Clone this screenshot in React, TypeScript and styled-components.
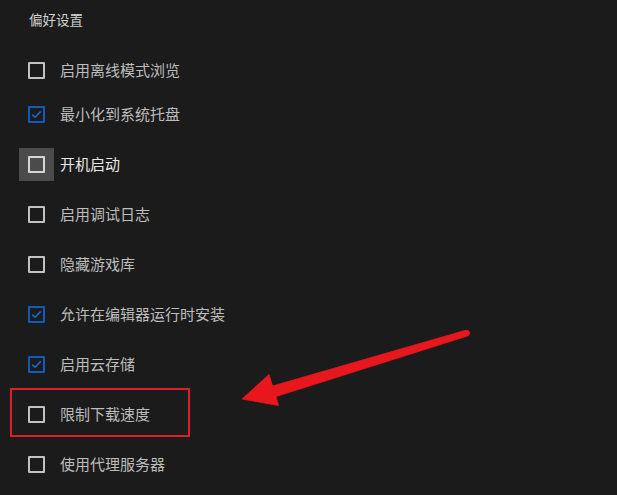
import React from 'react'
import styled, { createGlobalStyle } from 'styled-components'

const GlobalStyle = createGlobalStyle`
  html, body {
    margin: 0;
    padding: 0;
    background: #1b1b1b;
  }
  body {
    font-family: "Noto Sans CJK SC", "Noto Sans", sans-serif;
  }
`

interface OptionItem {
  label: string
  checked?: boolean
  hovered?: boolean
  marked?: boolean
  height?: number
}

const options: OptionItem[] = [
  { label: '启用离线模式浏览', height: 38 },
  { label: '最小化到系统托盘', checked: true },
  { label: '开机启动', hovered: true },
  { label: '启用调试日志' },
  { label: '隐藏游戏库' },
  { label: '允许在编辑器运行时安装', checked: true },
  { label: '启用云存储', checked: true },
  { label: '限制下载速度', marked: true },
  { label: '使用代理服务器' }
]

const Page = styled.div`
  position: relative;
  width: 617px;
  height: 495px;
  overflow: hidden;
  background: #1b1b1b;
`

const Panel = styled.div`
  display: flex;
  flex-direction: column;
  padding-left: 29px;
`

const Heading = styled.h2`
  margin: 0;
  height: 51px;
  padding-top: 9px;
  box-sizing: border-box;
  font-size: 13.5px;
  font-weight: 400;
  line-height: 20px;
  color: #d2d2d2;
`

const Row = styled.div<{ $height: number }>`
  position: relative;
  display: flex;
  align-items: center;
  height: ${(p) => p.$height}px;
`

const BoxArea = styled.div<{ $hovered?: boolean }>`
  display: flex;
  align-items: center;
  justify-content: center;
  width: 35px;
  height: 33px;
  margin-left: -10px;
  margin-right: 6px;
  background: ${(p) => (p.$hovered ? '#4b4b4b' : 'transparent')};
`

const Box = styled.div<{ $checked?: boolean; $hovered?: boolean }>`
  box-sizing: border-box;
  width: 17px;
  height: 17px;
  border: 2px solid ${(p) => (p.$checked ? '#0f5cbd' : p.$hovered ? '#d6d6d6' : '#c2c2c2')};
  border-radius: 1px;
  display: flex;
  align-items: center;
  justify-content: center;
`

const Label = styled.span<{ $hovered?: boolean }>`
  font-size: 15px;
  line-height: 20px;
  color: ${(p) => (p.$hovered ? '#e8e8e8' : '#bdbdbd')};
`

const Marker = styled.div`
  position: absolute;
  left: -19px;
  top: -1px;
  width: 180px;
  height: 49px;
  box-sizing: border-box;
  border: 2px solid #dc1f26;
  pointer-events: none;
`

const Overlay = styled.svg`
  position: absolute;
  left: 0;
  top: 0;
  pointer-events: none;
`

const CheckMark = () => (
  <svg width="11" height="9" viewBox="0 0 11 9">
    <path d="M1.2 4.6 L4 7.2 L9.8 1.4" fill="none" stroke="#1a6ad4" strokeWidth="1.5" />
  </svg>
)

const Option: React.FC<{ item: OptionItem }> = ({ item }) => (
  <Row $height={item.height ?? 50}>
    <BoxArea $hovered={item.hovered}>
      <Box $checked={item.checked} $hovered={item.hovered}>
        {item.checked ? <CheckMark /> : null}
      </Box>
    </BoxArea>
    <Label $hovered={item.hovered}>{item.label}</Label>
    {item.marked ? <Marker /> : null}
  </Row>
)

export default function App() {
  return (
    <Page>
      <GlobalStyle />
      <Panel>
        <Heading>偏好设置</Heading>
        {options.map((item) => (
          <Option key={item.label} item={item} />
        ))}
      </Panel>
      <Overlay width="617" height="495" viewBox="0 0 617 495">
        <path
          d="M242 399 L269 374.5 L272.5 386 L465.5 330.3 Q469.5 330 469.6 333 Q469.5 335.6 467.5 336 L276 396.5 L278.5 405.5 Z"
          fill="#e8161d"
          stroke="#e8161d"
          strokeWidth="0.8"
          strokeLinejoin="round"
        />
      </Overlay>
    </Page>
  )
}
